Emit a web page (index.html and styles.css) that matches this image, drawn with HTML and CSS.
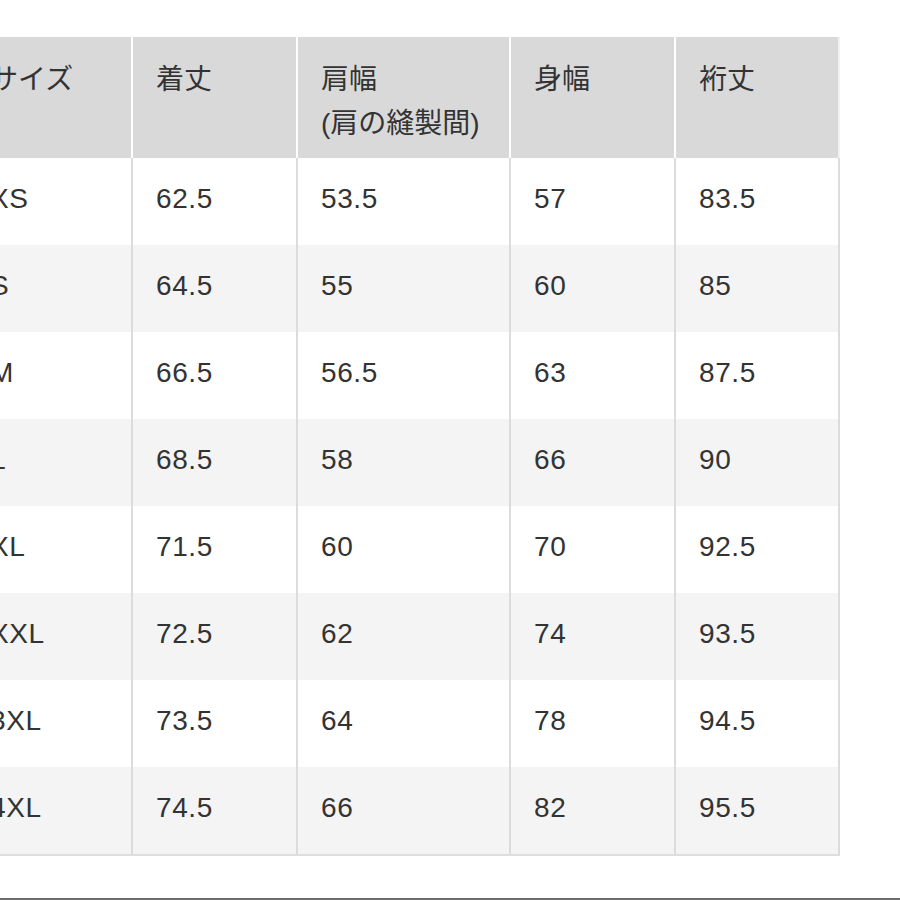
FILE: index.html
```html
<!DOCTYPE html>
<html lang="ja">
<head>
<meta charset="utf-8">
<title>サイズ表</title>
<link rel="stylesheet" href="styles.css">
</head>
<body>
<div class="page">
  <div class="size-table">
    <div class="row head">
      <div class="cell">サイズ</div>
      <div class="cell">着丈</div>
      <div class="cell">肩幅<br>(肩の縫製間)</div>
      <div class="cell">身幅</div>
      <div class="cell">裄丈</div>
    </div>
    <div class="row">
      <div class="cell">XS</div><div class="cell">62.5</div><div class="cell">53.5</div><div class="cell">57</div><div class="cell">83.5</div>
    </div>
    <div class="row alt">
      <div class="cell">S</div><div class="cell">64.5</div><div class="cell">55</div><div class="cell">60</div><div class="cell">85</div>
    </div>
    <div class="row">
      <div class="cell">M</div><div class="cell">66.5</div><div class="cell">56.5</div><div class="cell">63</div><div class="cell">87.5</div>
    </div>
    <div class="row alt">
      <div class="cell">L</div><div class="cell">68.5</div><div class="cell">58</div><div class="cell">66</div><div class="cell">90</div>
    </div>
    <div class="row">
      <div class="cell">XL</div><div class="cell">71.5</div><div class="cell">60</div><div class="cell">70</div><div class="cell">92.5</div>
    </div>
    <div class="row alt">
      <div class="cell">XXL</div><div class="cell">72.5</div><div class="cell">62</div><div class="cell">74</div><div class="cell">93.5</div>
    </div>
    <div class="row">
      <div class="cell">3XL</div><div class="cell">73.5</div><div class="cell">64</div><div class="cell">78</div><div class="cell">94.5</div>
    </div>
    <div class="row alt">
      <div class="cell">4XL</div><div class="cell">74.5</div><div class="cell">66</div><div class="cell">82</div><div class="cell">95.5</div>
    </div>
  </div>
  <div class="rule"></div>
</div>
</body>
</html>
```

FILE: styles.css
```css
html, body {
  margin: 0;
  padding: 0;
  background: #ffffff;
}

body {
  width: 900px;
  height: 900px;
  overflow: hidden;
  font-family: "Liberation Sans", "Noto Sans CJK JP", sans-serif;
  color: #333333;
}

.page {
  padding-top: 37px;
}

.size-table {
  margin-left: -27px;
  width: 867px;
  border-bottom: 2px solid #dedede;
}

.row {
  display: grid;
  grid-template-columns: 160px 165px 213px 165px 164px;
  height: 87px;
  background: #ffffff;
}

.row.alt {
  background: #f4f4f4;
}

.cell {
  box-sizing: border-box;
  display: flex;
  align-items: center;
  padding: 0 22px 6px 23px;
  border-right: 2px solid #dcdcdc;
  font-size: 28px;
  letter-spacing: 0.6px;
  line-height: 44px;
}

.cell:first-child {
  padding-left: 17px;
}

.row.head {
  height: 121px;
  background: #d9d9d9;
}

.row.head .cell {
  display: block;
  padding-top: 21px;
  padding-bottom: 0;
  border-right-color: #ffffff;
  letter-spacing: 0;
}

.row.head .cell:last-child {
  border-right-color: #f2f2f2;
}

.rule {
  margin-top: 42px;
  height: 2px;
  background: #6e6e6e;
}
```
